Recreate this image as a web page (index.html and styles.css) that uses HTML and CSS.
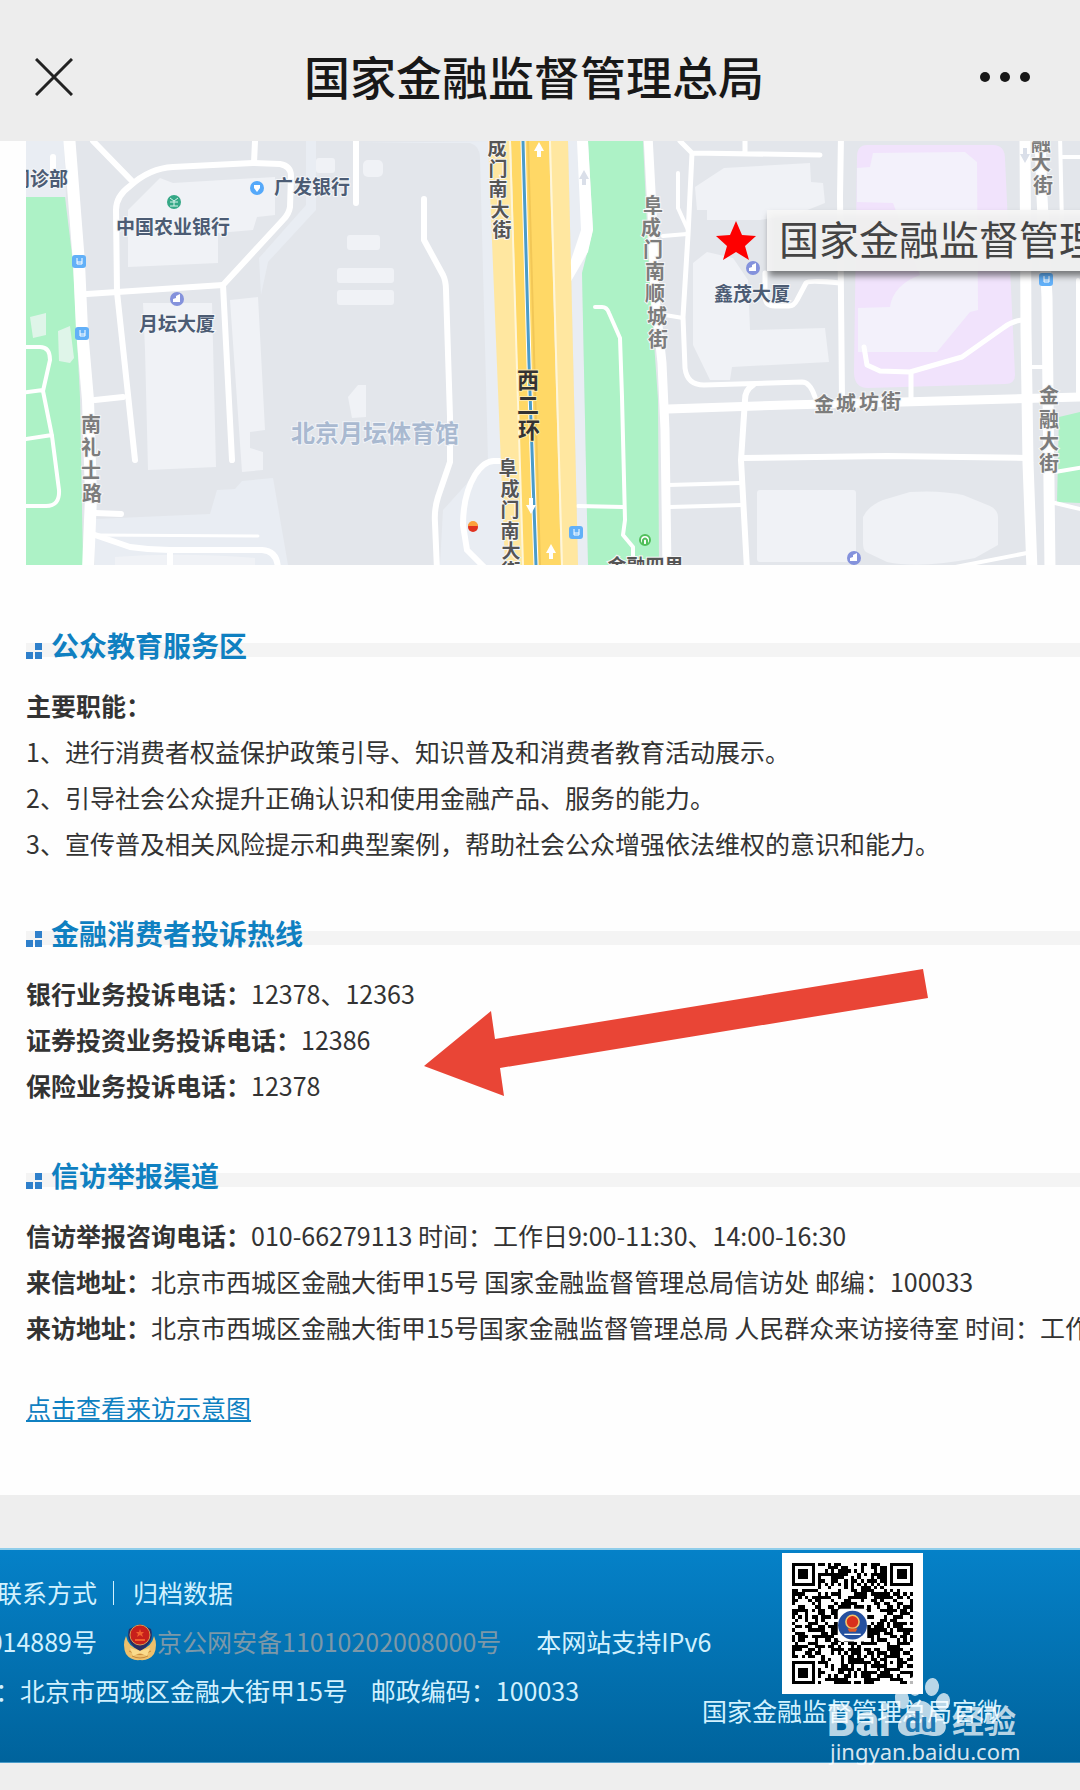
FILE: index.html
```
<!DOCTYPE html>
<html lang="zh-CN">
<head>
    <meta charset="UTF-8">
    <meta name="viewport" content="width=device-width, initial-scale=1">
    <title>国家金融监督管理总局</title>
    <link rel="stylesheet" href="styles.css">
</head>
<body>
    <header class="topbar">
        <button class="close-btn" type="button" aria-label="关闭">
            <svg width="38" height="38" viewBox="0 0 38 38"><path d="M1 1L37 37M37 1L1 37" stroke="#222" stroke-width="3" fill="none"/></svg>
        </button>
        <h1 class="topbar-title">国家金融监督管理总局</h1>
        <button class="more-btn" type="button" aria-label="更多">
            <svg width="50" height="12" viewBox="0 0 50 12" fill="#181818"><circle cx="5" cy="6" r="5"/><circle cx="25" cy="6" r="5"/><circle cx="45" cy="6" r="5"/></svg>
        </button>
    </header>

    <main class="content">
        <svg class="map" viewBox="26 141 1054 424">
            <rect x="26" y="141" width="1054" height="424" fill="#e3e6eb"/>
            <!-- 浅色地块 -->
            <g fill="#e9edf3">
                <path d="M26 141H64L66 197H26zM95 519L210 514L217 490L235 489L242 481L273 478L288 565H95z"/>
                <path d="M360 143H470Q480 146 480 158L488 460L443 510L440 565H506L492 141z"/>
                <path d="M306 141H316V210L268 262L261 295L259 258L306 205z"/>
                <path d="M568 141H588L593 230L582 273L588 565H578z"/>
            </g>
            <!-- 绿地 -->
            <g fill="#adf2c6">
                <path d="M26 197L65 197L73 263L80 397L83 565H26z"/>
                <path d="M588 141H643L649 270L658 400L659 565H588L582 273L593 230z"/>
                <path d="M1059 417L1080 412V503L1057 502z"/>
            </g>
            <path d="M867 145H993Q1005 145 1005 159L1015 375Q1015 384 1005 384L868 388Q854 388 854 372L857 157Q857 145 867 145z" fill="#f1e3fc"/>
            <path d="M873 153L965 152L977 162L978 310L970 312L937 352H858V308L890 307Q893 285 920 275L893 203L857 202V168L870 167z" fill="#f3f1fb"/>
            <!-- 建筑 -->
            <g fill="#f0f2f6">
                <path d="M128 210L160 178L173 183L275 177V215L257 217L253 230L218 233V263L128 267z"/>
                <path d="M143 303H212L216 467L148 470L145 350z"/>
                <path d="M230 300L258 297L265 430L250 432V448L263 452V470L242 472z"/>
                <path d="M115 557Q180 552 255 558V565H115z"/>
                <rect x="316" y="158" width="19" height="15" rx="3"/>
                <rect x="363" y="160" width="20" height="17" rx="5"/>
                <rect x="347" y="235" width="33" height="15" rx="3"/>
                <rect x="337" y="268" width="57" height="15" rx="3"/>
                <rect x="337" y="290" width="57" height="15" rx="3"/>
                <path d="M348 397L358 385H366V417L352 418z"/>
                <path d="M695 187L724 168L810 163L811 182L823 183L825 203L800 213L760 220L707 220V210H697z"/>
                <path d="M693 263L707 252L733 258L748 280L750 330L825 328L829 362L732 367L730 380H710L693 345z"/>
                <rect x="757" y="490" width="99" height="72" rx="3"/>
                <path d="M863 517Q868 506 883 500L910 492Q940 490 963 495L990 506Q998 510 998 517V545L975 558Q920 569 887 562L866 552Q863 550 863 543z"/>
                <path d="M30 317L46 313V335L33 338zM58 331L70 326L74 358L70 363L59 361z" fill="#dff5e9"/>
            </g>
            <!-- 道路 -->
            <g fill="none" stroke="#fff" stroke-linejoin="round" stroke-linecap="round" stroke-width="6">
                <path d="M69 135L79 263L82 330L88 400L91 497L88 570" stroke-width="12"/>
                <path d="M648 135L652 210L655 297L662 363L665 430L667 570" stroke-width="9"/>
                <path d="M1025 135L1026 330L1028 463L1032 570" stroke-width="11"/>
                <path d="M1040 135L1042 197L1047 297L1048 397L1050 570" stroke-width="11"/>
                <path d="M668 409L787 405L902 402L1084 397" stroke-width="9"/>
                <path d="M135 460L117 292L116 210Q116 196 130 186Q150 168 173 167L253 163L280 164Q291 166 291 176L290 207Q289 214 283 220L223 285L232 460"/>
                <path d="M87 294L223 285M95 400L123 397M93 141L133 182M255 141L254 163M95 513L121 514M53 157V183"/>
                <path d="M95 535L130 547Q150 550 170 550L262 550Q278 551 278 570M170 550V565"/>
                <path d="M95 535L258 536" stroke-width="3"/>
                <path d="M20 347H40Q50 347 50 360L43 391L52 436L59 490Q60 506 46 506H20M20 393L43 390M20 440L52 435" stroke-width="4"/>
                <path d="M356 130V203M424 199V240L443 275Q446 281 446 290L450 417V462L438 497Q434 510 435 523L437 570"/>
                <path d="M500 461H494Q484 461 475 475Q463 495 463 525L467 550L485 568"/>
                <path d="M595 307H602Q607 307 609 313L620 338L622 397L625 520L623 535L633 547V570M578 506L623 507" stroke-width="4"/>
                <path d="M680 141L692 153L688 235L683 317L685 368Q687 385 704 385L802 382Q810 382 815 397M692 153L820 155M745 141V153" stroke-width="5"/>
                <path d="M678 173V208L688 230M663 236L687 234M665 315L683 318M668 485L740 483M670 507L742 505" stroke-width="4"/>
                <path d="M841 135L840 197L842 398M753 385Q745 390 745 400L741 460L747 570M743 458L887 456L1027 458"/>
                <path d="M765 273V296Q765 306 775 306H789Q794 306 797 300L806 283Q809 280 840 283M864 347L867 365L880 371L910 372L962 357L1003 328Q1012 321 1022 320M911 372V400" stroke-width="5"/>
                <path d="M1060 135L1062 225M1063 157H1084M1030 367H1045M1055 472L1084 467M1055 503L1084 510M940 570L1027 553M1078 280V395" stroke-width="4"/>
            </g>
            <path d="M577 141H588L593 230L588 252L570 283V263L581 230z" fill="#fff"/>
            <!-- 西二环 -->
            <path d="M488 141H510L524 565H505z" fill="#ffe7a0"/>
            <path d="M550 141H568L578 565H562z" fill="#ffe7a0"/>
            <path d="M511 141H549L561 565H523z" fill="#ffd866"/>
            <path d="M510 141L523 565M550 141L562 565" stroke="#fff6d8" stroke-width="2"/>
            <path d="M528 141L540 565" stroke="#f2c757" stroke-width="2"/>
            <path d="M523 141L529 363L536 565" stroke="#fff" stroke-width="5" fill="none"/>
            <path d="M523 141L529 363L536 565" stroke="#4b9cc9" stroke-width="3" fill="none"/>
            <g fill="#fff">
                <path id="lane" d="M539 142L544 151H541V157H537V151H534z"/>
                <use href="#lane" x="12" y="402"/>
                <path d="M531 514L536 505H533V498H529V505H526z"/>
                <path d="M584 170L589 179H586V185H582V179H579zM1025 163L1030 154H1027V148H1023V154H1020z" fill="#dadfe9"/>
            </g>
            <!-- 图标 -->
            <g id="bus">
                <rect x="72" y="255" width="14" height="13" rx="3" fill="#62b0f8"/>
                <path d="M77 258V264H82V258M77 262H82" stroke="#fff" stroke-width="1" fill="none"/>
            </g>
            <use href="#bus" x="3" y="72"/>
            <use href="#bus" x="497" y="271"/>
            <use href="#bus" x="967" y="18"/>
            <circle cx="174" cy="202" r="7" fill="#35a886"/>
            <path d="M170 198L174 201L178 198M170 206H178M174 201V206M170 202H178" stroke="#d8f3ea" fill="none"/>
            <circle cx="257" cy="188" r="7" fill="#55a9fa"/>
            <path d="M254 185H260V188L257 192L254 188z" fill="#fff"/>
            <g id="tower">
                <circle cx="177" cy="299" r="7" fill="#8492dc"/>
                <path d="M173 302V299L176 298V296L180 294V302z" fill="#fff"/>
            </g>
            <use href="#tower" x="576" y="-31"/>
            <use href="#tower" x="677" y="259"/>
            <circle cx="473" cy="527" r="5" fill="#e0321f"/>
            <path d="M468 526A5 5 0 0 1 478 526z" fill="#fca13c"/>
            <circle cx="645" cy="540" r="5" fill="#fff" stroke="#51bf5c" stroke-width="2"/>
            <path d="M643 544V540Q645 537 647 540V544" stroke="#51bf5c" stroke-width="2" fill="none"/>
            <!-- 地名 -->
            <g class="map-label">
                <text x="11" y="186">门诊部</text>
                <text x="274" y="194">广发银行</text>
                <text x="116" y="234">中国农业银行</text>
                <text x="139" y="331">月坛大厦</text>
                <text x="714" y="301">鑫茂大厦</text>
            </g>
            <text class="map-place" x="291" y="442">北京月坛体育馆</text>
            <g class="map-road">
                <text x="91 91 91 92" y="432 455 478 501">南礼士路</text>
                <text x="653 651 653 655 655 657 658" y="213 235 257 279 301 324 347">阜成门南顺城街</text>
                <text x="824 846 869 891" y="412 411 410 409">金城坊街</text>
                <text x="1041 1041 1043" y="151 170 193">融大街</text>
                <text x="1049 1049 1049 1049" y="403 427 449 471">金融大街</text>
            </g>
            <g class="map-road map-road-dark">
                <text x="497 498 498 500 502" y="155 176 196 217 237">成门南大街</text>
                <text x="508 510 510 510 511 511" y="475 496 517 538 558 578">阜成门南大街</text>
                <text x="617 636 655 674" y="573 573 573 573">金融四里</text>
            </g>
            <text class="map-ring" x="528 528 529" y="388 413 438">西二环</text>
            <!-- 位置标注 -->
            <path d="M736 221L742 235L756 236L745 246L749 260L736 252L723 260L727 246L716 236L730 235z" fill="#fe0000"/>
            <rect class="map-tip" x="767" y="210" width="330" height="61"/>
            <text class="map-tip-text" x="779" y="255">国家金融监督管理</text>
        </svg>

        <section class="block">
            <h2 class="block-title"><i class="dots"></i>公众教育服务区</h2>
            <p><b>主要职能：</b></p>
            <p>1、进行消费者权益保护政策引导、知识普及和消费者教育活动展示。</p>
            <p>2、引导社会公众提升正确认识和使用金融产品、服务的能力。</p>
            <p>3、宣传普及相关风险提示和典型案例，帮助社会公众增强依法维权的意识和能力。</p>
        </section>

        <section class="block">
            <h2 class="block-title"><i class="dots"></i>金融消费者投诉热线</h2>
            <p><b>银行业务投诉电话：</b>12378、12363</p>
            <p><b>证券投资业务投诉电话：</b>12386</p>
            <p><b>保险业务投诉电话：</b>12378</p>
            <svg class="arrow" width="504" height="128" viewBox="0 0 504 128"><path d="M0 97L67 42L71 70L499 0L504 29L76 99L80 127z" fill="#e94536"/></svg>
        </section>

        <section class="block">
            <h2 class="block-title"><i class="dots"></i>信访举报渠道</h2>
            <p><b>信访举报咨询电话：</b>010-66279113 时间：工作日9:00-11:30、14:00-16:30</p>
            <p><b>来信地址：</b>北京市西城区金融大街甲15号 国家金融监督管理总局信访处 邮编：100033</p>
            <p><b>来访地址：</b>北京市西城区金融大街甲15号国家金融监督管理总局 人民群众来访接待室 时间：工作</p>
            <a class="map-link" href="#">点击查看来访示意图</a>
        </section>
    </main>

    <footer class="footer">
        <div class="footer-info">
            <div class="footer-row">
                <a class="footer-start" href="#">联系方式</a>
                <span class="footer-sep"></span>
                <a href="#">归档数据</a>
            </div>
            <div class="footer-row">
                <span class="footer-start">014889号</span>
                <a class="police" href="#">
                    <svg width="34" height="38" viewBox="0 0 34 38">
                        <path d="M3 13Q-1 22 3 31Q8 38 17 37Q26 38 31 31Q35 22 31 13Q29 24 17 27Q5 24 3 13z" fill="#edc06c"/>
                        <path d="M6 28Q17 35 28 28M9 33Q17 37 25 33" stroke="#c98a3c" fill="none"/>
                        <path d="M17 1L28 6Q32 20 17 28Q2 20 6 6z" fill="#2a2d63"/>
                        <circle cx="17" cy="12" r="10" fill="#c7201b" stroke="#d99a50" stroke-width="1"/>
                        <path d="M17 6L18 9H21L19 11L20 14L17 12L14 14L15 11L13 9H16zM12 16H22V18H12z" fill="#f0602c"/>
                        <path d="M7 25L17 28L27 25L24 33L17 30L10 33z" fill="#fadb8c"/>
                    </svg>京公网安备11010202008000号</a>
                <span class="ipv6">本网站支持IPv6</span>
            </div>
            <div class="footer-row">
                <span class="footer-address">：北京市西城区金融大街甲15号</span>
                <span>邮政编码：100033</span>
            </div>
        </div>
        <div class="footer-qr">
            <svg class="qr" viewBox="-3 -3 43 43">
                <path id="qrDots" shape-rendering="crispEdges"/>
                <rect x="14" y="14" width="9" height="10" rx="1" fill="#fff"/>
                <circle cx="18.500" cy="19" r="4.400" fill="#25509f"/>
                <circle cx="18.500" cy="18" r="2" fill="#d9301c" stroke="#f4c169" stroke-width=".5"/>
                <path d="M17 20H20L19.500 21H17.500z" fill="#e35a24"/>
                <path d="M16 21.800H21" stroke="#fff" stroke-width=".4"/>
            </svg>
            <span>国家金融监督管理总局官微</span>
        </div>
        <svg class="watermark" width="196" height="92" viewBox="0 0 196 92">
            <g>
                <ellipse cx="74" cy="23" rx="7" ry="10" transform="rotate(-12 74 23)"/>
                <ellipse cx="87" cy="10" rx="7" ry="10"/>
                <ellipse cx="104" cy="11" rx="7" ry="9" transform="rotate(8 104 11)"/>
                <ellipse cx="115" cy="26" rx="7" ry="9" transform="rotate(14 115 26)"/>
                <path d="M93 25C101 25 104 32 111 39C122 47 119 60 108 60C100 60 96 58 92 58C87 59 84 60 80 60C68 59 67 46 76 39C82 34 84 25 93 25z"/>
            </g>
            <text class="wm-logo" x="-1" y="60">Bai</text>
            <text class="wm-du" x="77" y="56">du</text>
            <text class="wm-cn" x="124" y="57">经验</text>
            <text class="wm-url" x="2" y="84">jingyan.baidu.com</text>
        </svg>
    </footer>
    <script src="script.js"></script>
</body>
</html>
```

FILE: styles.css
```
* { box-sizing: border-box; }
body {
    margin: 0; background: #eee; color: #333; overflow-x: hidden;
    font: 25px/46px "Noto Sans CJK SC", "Noto Sans", sans-serif;
}
button { border: 0; padding: 0; background: none; cursor: pointer; }
p, h1, h2 { margin: 0; }

.topbar { display: flex; align-items: center; height: 141px; padding: 12px 48px 0 18px; background: #ededed; }
.topbar-title { flex: 1; padding-bottom: 4px; text-align: center; font-size: 46px; font-weight: 500; line-height: 64px; color: #181818; white-space: nowrap; }
.close-btn { width: 72px; height: 64px; }
.more-btn { width: 54px; height: 64px; }
.close-btn svg, .more-btn svg { display: block; margin: auto; }

.content { padding: 0 0 65px 26px; background: #fefefe; overflow: hidden; }
.map { display: block; width: 100%; margin-bottom: 57px; }
.map-label { font-size: 19px; font-weight: 700; fill: #4c5c74; stroke: #f4f6f9; stroke-width: 2px; paint-order: stroke; }
.map-place { font-size: 24px; font-weight: 700; fill: #a9b9d0; stroke: #f0f3f8; stroke-width: 2px; paint-order: stroke; }
.map-road { font-size: 20px; font-weight: 700; fill: #7c7c7c; stroke: #f6f6f6; stroke-width: 2px; paint-order: stroke; text-anchor: middle; }
.map-road-dark { font-size: 19px; fill: #555; }
.map-ring { font-size: 22px; font-weight: 700; fill: #333; stroke: #ffe9a8; stroke-width: 2px; paint-order: stroke; text-anchor: middle; }
.map-tip { fill: #f5f5f5; fill-opacity: .94; filter: drop-shadow(2px 5px 3px rgba(0, 0, 0, .5)); }
.map-tip-text { font-size: 40px; fill: #444; }

.block { position: relative; white-space: nowrap; margin-bottom: 44px; }
.block:last-child { margin-bottom: 0; }
.block-title {
    display: flex; align-items: center; margin-bottom: 14px;
    font-size: 28px; font-weight: bold; color: #0f80c1;
    background: linear-gradient(#f4f4f4, #f4f4f4) 0 21px / 100% 14px no-repeat;
}
.dots {
    width: 16px; height: 16px; margin: 12px 9px 0 0;
    background:
        linear-gradient(#2f80cb, #2f80cb) 9px 0 / 7px 7px no-repeat,
        linear-gradient(#2f80cb, #2f80cb) 0 9px / 7px 7px no-repeat,
        linear-gradient(#2f80cb, #2f80cb) 9px 9px / 7px 7px no-repeat;
}
.arrow { position: absolute; left: 398px; top: 59px; }
.map-link { display: inline-block; margin-top: 34px; color: #0f80c1; text-underline-offset: 2px; }

.footer {
    position: relative; display: flex; height: 215px; margin: 53px 0 27px;
    border-top: 2px solid #8fcdea; border-bottom: 1px solid #4a9cc9;
    background: linear-gradient(#0581c8, #00639c);
    color: #d2f1fe; line-height: 49px; white-space: nowrap;
}
.footer a { color: inherit; text-decoration: none; }
.footer-info { width: 65%; padding-top: 18px; }
.footer-row { display: flex; align-items: center; height: 49px; }
/* 首列靠右，超出部分向左侧裁切 */
.footer-start { display: flex; justify-content: flex-end; width: 97px; }
.footer-sep { width: 1px; height: 24px; margin: 0 19px 0 16px; background: #d2f1fe; }
.footer .police { display: flex; align-items: center; margin-left: 26px; color: #7d98a8; }
.ipv6 { margin-left: 35px; }
.footer-address { margin: 0 23px 0 -5px; }
.footer-qr { display: flex; flex-direction: column; align-items: center; padding-top: 3px; line-height: 32px; }
.qr { width: 141px; height: 141px; background: #fff; }

.watermark { position: absolute; left: 828px; top: 126px; fill: #fff; fill-opacity: .72; overflow: visible; }
.wm-logo { font: 900 44px/1 Roboto, sans-serif; }
.wm-du { font: 700 28px/1 Roboto, sans-serif; fill: #0a6fae; fill-opacity: .9; }
.wm-cn { font-size: 32px; font-weight: 700; }
.wm-url { font: 22px/1 "Noto Sans", sans-serif; fill-opacity: .85; }
```

FILE: script.js
```
// 二维码：37 x 37 个模块
const SIZE = 37;
let seed = 20231;

function rand() {
    seed = (seed * 1103515245 + 12345) % 2147483648;
    return seed / 2147483648;
}

// 方形定位图案，radius 为外圈半径
function ring(x, y, cx, cy, radius) {
    const d = Math.max(Math.abs(x - cx), Math.abs(y - cy));
    if (d > radius + 1) return null;
    if (radius === 3) return d !== 2 && d !== 4;
    return d > radius ? null : d !== 1;
}

function isDark(x, y) {
    const marks = [[3, 3, 3], [33, 3, 3], [3, 33, 3], [30, 30, 2]];
    for (const [cx, cy, r] of marks) {
        const v = ring(x, y, cx, cy, r);
        if (v !== null) return v;
    }
    if (x === 6 || y === 6) return (x + y) % 2 === 0;
    return rand() > 0.44;
}

let d = '';
for (let y = 0; y < SIZE; y++) {
    for (let x = 0; x < SIZE; x++) {
        if (isDark(x, y)) d += `M${x} ${y}h1v1h-1z`;
    }
}
document.getElementById('qrDots').setAttribute('d', d);
```
